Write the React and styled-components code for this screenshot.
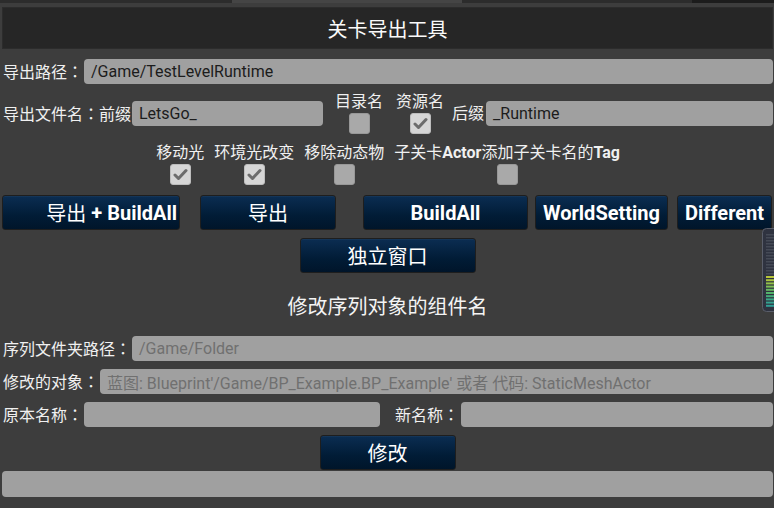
import React from "react";
import styled, { createGlobalStyle } from "styled-components";

const GlobalStyle = createGlobalStyle`
  html, body {
    margin: 0;
    padding: 0;
    background: #3d3d3d;
  }
  * {
    box-sizing: border-box;
  }
`;

const Page = styled.div`
  position: relative;
  width: 774px;
  height: 508px;
  overflow: hidden;
  padding: 0 1px 0 2px;
  background: #3d3d3d;
  font-family: Roboto, "Noto Sans CJK SC", sans-serif;
  color: #f0f0f0;
`;

const TabStrip = styled.div`
  display: flex;
  height: 3px;
  margin: 0 -1px 0 -2px;
`;

const Tab = styled.div`
  width: ${(p) => p.$w}px;
  flex: ${(p) => (p.$w ? "none" : 1)};
  background: ${(p) => p.$tone};
`;

const TitleBar = styled.div`
  height: 42px;
  margin-top: 4px;
  display: flex;
  align-items: center;
  justify-content: center;
  background: #262626;
  border: 1px solid #2c2c2c;
  font-size: 20px;
  color: #fafafa;
`;

const Row = styled.div`
  display: flex;
  align-items: center;
  height: ${(p) => p.$h || 25}px;
  margin-top: ${(p) => p.$mt || 0}px;
  padding-left: ${(p) => (p.$flush ? 0 : 1)}px;
  justify-content: ${(p) => p.$justify || "flex-start"};
  gap: ${(p) => p.$gap || 0}px;
`;

const Label = styled.span`
  flex: none;
  width: ${(p) => (p.$w ? `${p.$w}px` : "auto")};
  margin-left: ${(p) => p.$ml || 0}px;
  font-size: 16px;
  line-height: 18px;
  white-space: nowrap;
`;

// full-width colon drawn centred in its cell, as the engine's fallback font does
const Colon = styled.span`
  font-family: "Noto Sans CJK TC", sans-serif;
`;

const Field = styled.div`
  flex: ${(p) => (p.$w ? "none" : 1)};
  width: ${(p) => (p.$w ? `${p.$w}px` : "auto")};
  height: ${(p) => p.$h || 25}px;
  margin-left: ${(p) => p.$ml || 0}px;
  display: flex;
  align-items: center;
  padding-left: 7px;
  background: #a0a0a0;
  border-radius: 4px;
  font-size: 16px;
  white-space: nowrap;
  overflow: hidden;
  color: ${(p) => (p.$hint ? "#707070" : "#1c1c1c")};
`;

const CheckCol = styled.div`
  flex: none;
  display: flex;
  flex-direction: column;
  align-items: center;
  gap: 2px;
  margin-left: ${(p) => p.$ml || 0}px;
`;

const Box = styled.div`
  width: 21px;
  height: 21px;
  border-radius: 3px;
  display: flex;
  align-items: center;
  justify-content: center;
  background: ${(p) => (p.$on ? "#d6d6d6" : "#a9a9a9")};
  border: 1px solid ${(p) => (p.$on ? "#bdbdbd" : "#989898")};
`;

const Button = styled.div`
  flex: none;
  width: ${(p) => p.$w}px;
  height: 35px;
  margin-left: ${(p) => p.$ml || 0}px;
  display: flex;
  align-items: center;
  justify-content: ${(p) => p.$justify || "center"};
  padding-right: ${(p) => (p.$justify ? 2 : 0)}px;
  overflow: hidden;
  white-space: nowrap;
  background: linear-gradient(#0b2d52, #011c36 60%, #00152a);
  border: 1px solid #1e1e1e;
  border-radius: 3px;
  box-shadow: inset 0 1px 0 rgba(255, 255, 255, 0.04);
  font-size: 20px;
  color: #ffffff;

  b {
    font-weight: 700;
  }
`;

const SectionTitle = styled.div`
  height: 26px;
  margin-top: 21px;
  text-align: center;
  font-size: 20px;
  line-height: 26px;
  color: #f4f4f4;
`;

const Meter = styled.svg`
  position: absolute;
  right: 0;
  top: 228px;
`;

const Check = ({ on }) => (
  <Box $on={on}>
    {on && (
      <svg width="15" height="13" viewBox="0 0 15 13">
        <path
          d="M2 7 L5.5 10.5 L13 2.5"
          fill="none"
          stroke="#6c6c6c"
          strokeWidth="3"
          strokeLinecap="round"
          strokeLinejoin="round"
        />
      </svg>
    )}
  </Box>
);

const LevelMeter = () => {
  const greens = ["#b7c53a", "#a9c43f", "#93c14a", "#7dbd55", "#67b860", "#52b36b", "#44ad7a", "#3aa887", "#34a390", "#309e96"];
  return (
    <Meter width="12" height="84" viewBox="0 0 12 84">
      <rect x="0.5" y="0.5" width="20" height="83" rx="4" fill="#2f3340" stroke="#5a5e6a" />
      {Array.from({ length: 14 }).map((_, i) => (
        <rect key={i} x="4" y={6 + i * 3} width="8" height="1.5" fill="#454a56" />
      ))}
      {greens.map((c, i) => (
        <rect key={c} x="4" y={48 + i * 3.2} width="8" height="2" fill={c} />
      ))}
    </Meter>
  );
};

const C = () => <Colon>：</Colon>;

export default function App() {
  return (
    <>
      <GlobalStyle />
      <Page>
        <TabStrip>
          <Tab $w={232} $tone="#2c2c2c" />
          <Tab $w={230} $tone="#454545" />
          <Tab $w={230} $tone="#2c2c2c" />
          <Tab $tone="#1c1c1c" />
        </TabStrip>
        <TitleBar>关卡导出工具</TitleBar>

        <Row $mt={10}>
          <Label $w={81}>导出路径<C /></Label>
          <Field>/Game/TestLevelRuntime</Field>
        </Row>

        <Row $mt={9} $h={41}>
          <Label $w={129}>导出文件名<C />前缀</Label>
          <Field $w={191}>LetsGo_</Field>
          <CheckCol $ml={12}>
            <Label>目录名</Label>
            <Check />
          </CheckCol>
          <CheckCol $ml={13}>
            <Label>资源名</Label>
            <Check on />
          </CheckCol>
          <Label $ml={8}>后缀</Label>
          <Field $ml={2}>_Runtime</Field>
        </Row>

        <Row $mt={10} $h={41} $justify="center" $gap={10}>
          <CheckCol>
            <Label>移动光</Label>
            <Check on />
          </CheckCol>
          <CheckCol>
            <Label>环境光改变</Label>
            <Check on />
          </CheckCol>
          <CheckCol>
            <Label>移除动态物</Label>
            <Check />
          </CheckCol>
          <CheckCol>
            <Label>
              子关卡<b>Actor</b>添加子关卡名的<b>Tag</b>
            </Label>
            <Check />
          </CheckCol>
        </Row>

        <Row $mt={10} $h={35} $flush>
          <Button $w={178} $justify="flex-end">
            导出&nbsp;<b>+ BuildAll</b>
          </Button>
          <Button $w={136} $ml={20}>导出</Button>
          <Button $w={165} $ml={27}>
            <b>BuildAll</b>
          </Button>
          <Button $w={133} $ml={7}>
            <b>WorldSetting</b>
          </Button>
          <Button $w={95} $ml={9}>
            <b>Different</b>
          </Button>
        </Row>

        <Row $mt={8} $h={35} $justify="center" $flush>
          <Button $w={176}>独立窗口</Button>
        </Row>

        <SectionTitle>修改序列对象的组件名</SectionTitle>

        <Row $mt={16}>
          <Label $w={129}>序列文件夹路径<C /></Label>
          <Field $hint>/Game/Folder</Field>
        </Row>
        <Row $mt={8}>
          <Label $w={97}>修改的对象<C /></Label>
          <Field $hint>蓝图: Blueprint'/Game/BP_Example.BP_Example' 或者 代码: StaticMeshActor</Field>
        </Row>
        <Row $mt={8}>
          <Label $w={81}>原本名称<C /></Label>
          <Field $w={296} />
          <Label $ml={15} $w={66}>新名称<C /></Label>
          <Field />
        </Row>

        <Row $mt={8} $h={35} $justify="center" $flush>
          <Button $w={136}>修改</Button>
        </Row>
        <Row $mt={1} $h={26} $flush>
          <Field $h={26} />
        </Row>

        <LevelMeter />
      </Page>
    </>
  );
}
